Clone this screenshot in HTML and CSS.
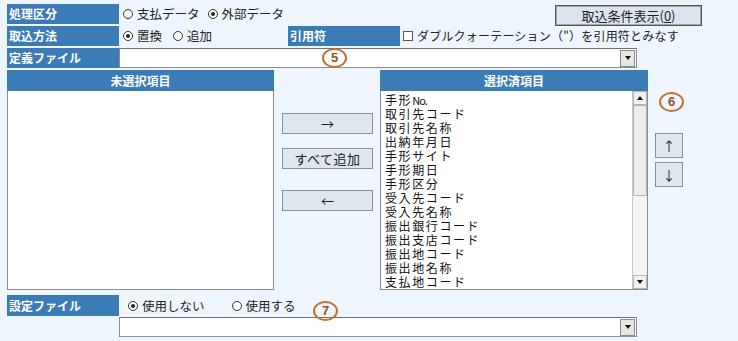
FILE: index.html
```html
<!doctype html>
<html lang="ja">

<head>
    <meta charset="UTF-8" />
    <title>取込設定</title>
    <link rel="stylesheet" href="styles.css">
</head>

<body>
    <div class="page">
        <!-- 処理区分 -->
        <div class="row">
            <div class="label">処理区分</div>
            <div class="options">
                <span class="opt"><span class="radio"></span>支払データ</span>
                <span class="opt"><span class="radio on"></span>外部データ</span>
            </div>
            <div class="btn-cond">取込条件表示(<u>0</u>)</div>
        </div>
        <!-- 取込方法 / 引用符 -->
        <div class="row">
            <div class="label">取込方法</div>
            <div class="options wide">
                <span class="opt"><span class="radio on"></span>置換</span>
                <span class="opt"><span class="radio"></span>追加</span>
            </div>
            <div class="label">引用符</div>
            <span class="opt check"><span class="box"></span>ダブルクォーテーション（"）を引用符とみなす</span>
        </div>
        <!-- 定義ファイル -->
        <div class="row">
            <div class="label">定義ファイル</div>
            <div class="select"><span class="arrow"></span></div>
        </div>

        <div class="lists">
            <div class="list">
                <div class="list-head">未選択項目</div>
                <div class="list-body"></div>
            </div>
            <div class="move-col">
                <div class="btn">→</div>
                <div class="btn all">すべて追加</div>
                <div class="btn back">←</div>
            </div>
            <div class="list">
                <div class="list-head">選択済項目</div>
                <div class="list-body">
                    <ul class="items">
                        <li>手形<span class="no">No.</span></li>
                        <li>取引先コード</li>
                        <li>取引先名称</li>
                        <li>出納年月日</li>
                        <li>手形サイト</li>
                        <li>手形期日</li>
                        <li>手形区分</li>
                        <li>受入先コード</li>
                        <li>受入先名称</li>
                        <li>振出銀行コード</li>
                        <li>振出支店コード</li>
                        <li>振出地コード</li>
                        <li>振出地名称</li>
                        <li>支払地コード</li>
                    </ul>
                    <div class="scrollbar">
                        <span class="sb-btn up"></span>
                        <span class="sb-thumb"></span>
                        <span class="sb-track"></span>
                        <span class="sb-btn down"></span>
                    </div>
                </div>
            </div>
            <div class="order-col">
                <div class="btn small">↑</div>
                <div class="btn small">↓</div>
            </div>
        </div>

        <!-- 設定ファイル -->
        <div class="row setting">
            <div class="label">設定ファイル</div>
            <div class="options set-opts">
                <span class="opt"><span class="radio on"></span>使用しない</span>
                <span class="opt"><span class="radio"></span>使用する</span>
            </div>
        </div>
        <div class="select bottom"><span class="arrow"></span></div>

        <span class="badge b5">5</span>
        <span class="badge b6">6</span>
        <span class="badge b7">7</span>
    </div>
</body>

</html>
```

FILE: styles.css
```css
*,
*::before,
*::after {
    box-sizing: border-box;
}

body {
    margin: 0;
    background: #eef5fc;
    font-family: "Noto Sans CJK JP", "Noto Sans", sans-serif;
    font-size: 12px;
    color: #222;
}

.page {
    position: relative;
    width: 738px;
    height: 341px;
    padding: 4px 0 0 7px;
    overflow: hidden;
}

.row {
    display: flex;
    align-items: center;
    height: 20px;
    margin-bottom: 2px;
}

.label {
    flex: none;
    width: 112px;
    height: 20px;
    padding-left: 2px;
    background: #3b7bb6;
    color: #fff;
    font-weight: bold;
    font-size: 12px;
    line-height: 20px;
}

.options {
    display: flex;
    gap: 8px;
    padding-left: 4px;
}

.options.wide {
    width: 169px;
    gap: 11px;
}

.opt {
    display: flex;
    align-items: center;
    gap: 4px;
    font-size: 12.5px;
    line-height: 20px;
    white-space: nowrap;
}

.radio {
    display: flex;
    align-items: center;
    justify-content: center;
    width: 10px;
    height: 10px;
    border: 1px solid #333;
    border-radius: 50%;
    background: #fff;
}

.radio.on::after {
    content: "";
    width: 4px;
    height: 4px;
    border-radius: 50%;
    background: #222;
}

.check {
    padding-left: 3px;
    font-size: 12px;
    letter-spacing: 0.2px;
}

.box {
    width: 10px;
    height: 10px;
    border: 1px solid #555;
    background: #fff;
}

.btn-cond {
    align-self: flex-start;
    margin: 1px 36px 0 auto;
    width: 147px;
    height: 21px;
    border: 1px solid #555;
    box-shadow: inset 0 0 0 1px #a0a7ae;
    background: #dce5ee;
    font-size: 13px;
    line-height: 19px;
    text-align: center;
}

.select {
    display: flex;
    justify-content: flex-end;
    align-items: center;
    width: 518px;
    height: 20px;
    padding-right: 1px;
    background: #fff;
    border: 1px solid #8d8d8d;
    border-top-color: #6f6f6f;
}

.arrow {
    display: flex;
    align-items: center;
    justify-content: center;
    width: 15px;
    height: 17px;
    background: #e6e6e6;
    border: 1px solid #8a8a8a;
}

.arrow::after {
    content: "";
    border-left: 3px solid transparent;
    border-right: 3px solid transparent;
    border-top: 4px solid #111;
}

/* lists */
.lists {
    display: flex;
    height: 220px;
}

.list {
    display: flex;
    flex-direction: column;
    width: 267px;
}

.list + .move-col + .list {
    width: 268px;
    margin-left: 7px;
}

.list-head {
    height: 21px;
    background: #3b7bb6;
    color: #fff;
    font-weight: bold;
    font-size: 12px;
    line-height: 21px;
    text-align: center;
}

.list-body {
    flex: 1;
    display: flex;
    background: #fff;
    border: 1px solid #8c8c8c;
    border-top: none;
    overflow: hidden;
}

.items {
    flex: 1;
    list-style: none;
    margin: 0;
    padding: 2px 0 0 4px;
    font-size: 12px;
    line-height: 14px;
    letter-spacing: 1.6px;
    color: #111;
    overflow: hidden;
}

.items li {
    height: 14px;
    white-space: nowrap;
}

.no {
    letter-spacing: -1px;
    font-size: 11px;
}

.scrollbar {
    display: flex;
    flex-direction: column;
    width: 15px;
    border-left: 1px solid #c8c8c8;
    background: #f4f4f4;
}

.sb-btn {
    display: flex;
    align-items: center;
    justify-content: center;
    height: 14px;
    background: #f0f0f0;
    border: 1px solid #b4b4b4;
}

.sb-btn.up::after {
    content: "";
    border-left: 3px solid transparent;
    border-right: 3px solid transparent;
    border-bottom: 4px solid #111;
}

.sb-btn.down::after {
    content: "";
    border-left: 3px solid transparent;
    border-right: 3px solid transparent;
    border-top: 4px solid #111;
}

.sb-thumb {
    height: 91px;
    background: #ececec;
    border: 1px solid #b4b4b4;
}

.sb-track {
    flex: 1;
}

.move-col {
    display: flex;
    flex-direction: column;
    width: 91px;
    margin-left: 8px;
    padding-top: 43px;
}

.btn {
    height: 21px;
    background: #dfe6ee;
    border: 1px solid #8a9098;
    font-size: 13px;
    line-height: 19px;
    text-align: center;
    color: #222;
}

.btn.all {
    margin-top: 14px;
    letter-spacing: 0.5px;
}

.btn.back {
    margin-top: 21px;
}

.order-col {
    display: flex;
    flex-direction: column;
    gap: 4px;
    width: 28px;
    margin-left: 7px;
    padding-top: 63px;
}

.btn.small {
    height: 25px;
    line-height: 23px;
}

/* 設定ファイル */
.row.setting {
    margin-top: 5px;
    height: 21px;
    margin-bottom: 1px;
}

.row.setting .label {
    height: 21px;
    line-height: 21px;
}

.set-opts {
    gap: 27px;
    padding-left: 9px;
}

.select.bottom {
    margin-left: 112px;
}

/* number badges */
.badge {
    position: absolute;
    width: 25px;
    height: 20px;
    border: 2px solid #c07031;
    border-radius: 50%;
    color: #9a4f1c;
    font: bold 13px "Liberation Sans", sans-serif;
    line-height: 16px;
    text-align: center;
}

.b5 {
    left: 322px;
    top: 48px;
}

.b6 {
    left: 659px;
    top: 92px;
}

.b7 {
    left: 313px;
    top: 301px;
}
```
